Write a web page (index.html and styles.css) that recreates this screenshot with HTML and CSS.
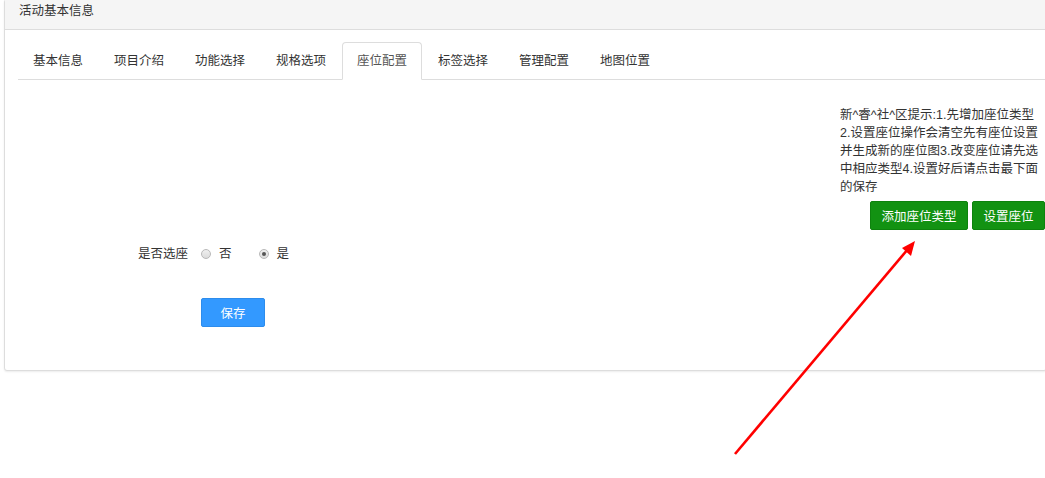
FILE: index.html
```html
<!DOCTYPE html>
<html lang="zh-CN">
<head>
<meta charset="utf-8">
<title>活动基本信息</title>
<link rel="stylesheet" href="styles.css">
</head>
<body>
<div class="panel">
  <div class="panel-heading">活动基本信息</div>
  <div class="panel-body">
    <ul class="nav-tabs">
      <li><a>基本信息</a></li>
      <li><a>项目介绍</a></li>
      <li><a>功能选择</a></li>
      <li><a>规格选项</a></li>
      <li class="active"><a>座位配置</a></li>
      <li><a>标签选择</a></li>
      <li><a>管理配置</a></li>
      <li><a>地图位置</a></li>
    </ul>
    <div class="tab-pane">
      <div class="seat-tools">
        <p class="tip">新^睿^社^区提示:1.先增加座位类型<br>2.设置座位操作会清空先有座位设置<br>并生成新的座位图3.改变座位请先选<br>中相应类型4.设置好后请点击最下面<br>的保存</p>
        <div class="tool-btns">
          <button class="btn btn-green">添加座位类型</button>
          <button class="btn btn-green">设置座位</button>
        </div>
      </div>
      <div class="form-row radio-row">
        <label class="form-label">是否选座</label>
        <div class="radios">
          <span class="radio"><span class="radio-dot"></span>否</span>
          <span class="radio"><span class="radio-dot checked"></span>是</span>
        </div>
      </div>
      <div class="form-row save-row">
        <span></span>
        <div><button class="btn btn-blue">保存</button></div>
      </div>
    </div>
  </div>
</div>
<svg class="arrow" width="1045" height="478" viewBox="0 0 1045 478">
  <line x1="735" y1="454" x2="908" y2="249" stroke="#ff0000" stroke-width="2.6"/>
  <polygon points="915,241 902,248 911,256" fill="#ff0000"/>
</svg>
</body>
</html>
```

FILE: styles.css
```css
html, body {
  margin: 0;
  padding: 0;
  overflow: hidden;
  background: #fff;
}
body {
  font-family: "Liberation Sans", "Noto Sans CJK SC", sans-serif;
  font-size: 12.5px;
  color: #333;
  position: relative;
  width: 1045px;
  height: 478px;
}
.panel {
  box-sizing: border-box;
  width: 1043px;
  margin: -1px 0 0 4px;
  border: 1px solid #dddddd;
  border-radius: 3px;
  box-shadow: 0 1px 2px rgba(0, 0, 0, 0.08);
  background: #fff;
}
.panel-heading {
  background: #f5f5f5;
  border-bottom: 1px solid #dddddd;
  padding: 2px 14px 9px;
  line-height: 18px;
  color: #333;
}
.panel-body {
  padding: 12px 0 13px 13px;
}
.nav-tabs {
  list-style: none;
  margin: 0;
  padding: 0;
  display: flex;
  border-bottom: 1px solid #dddddd;
}
.nav-tabs li {
  margin: 0 1px -1px 0;
}
.nav-tabs a {
  display: block;
  padding: 8px 14px;
  line-height: 20px;
  border: 1px solid transparent;
  border-radius: 4px 4px 0 0;
  color: #333;
}
.nav-tabs .active a {
  border-color: #dddddd #dddddd transparent;
  background: #fff;
  color: #555;
}
.tab-pane {
  padding: 26px 0 30px;
}
.seat-tools {
  margin-left: auto;
  margin-right: 1px;
  width: 205px;
}
.tip {
  margin: 0;
  line-height: 18px;
  white-space: nowrap;
  color: #333;
}
.tool-btns {
  display: flex;
  justify-content: flex-end;
  gap: 4px;
  margin-top: 5px;
}
.btn {
  font-family: "Noto Sans CJK SC", sans-serif;
  font-size: 12.5px;
  height: 29px;
  line-height: 27px;
  padding: 0 10.5px;
  border: 1px solid transparent;
  border-radius: 2px;
  color: #fff;
  cursor: pointer;
}
.btn-green {
  background: #129212;
  border-color: #0d820d;
}
.btn-blue {
  background: #3399ff;
  border-color: #2d8cec;
  padding: 0 18.5px;
}
.form-row {
  display: grid;
  grid-template-columns: 170px 1fr;
  column-gap: 13px;
  align-items: center;
}
.radio-row {
  margin-top: 14px;
}
.form-label {
  text-align: right;
  line-height: 20px;
}
.radios {
  display: flex;
  gap: 27px;
  line-height: 20px;
}
.radio {
  display: inline-flex;
  align-items: center;
  gap: 8px;
}
.radio-dot {
  box-sizing: border-box;
  width: 10px;
  height: 10px;
  border-radius: 50%;
  border: 1px solid #b9b9b9;
  background: linear-gradient(#f0f0f0, #dcdcdc);
  position: relative;
}
.radio-dot.checked::after {
  content: "";
  position: absolute;
  left: 2px;
  top: 2px;
  width: 4px;
  height: 4px;
  border-radius: 50%;
  background: #555;
}
.save-row {
  margin-top: 34px;
}
.arrow {
  position: absolute;
  left: 0;
  top: 0;
  pointer-events: none;
}
```
